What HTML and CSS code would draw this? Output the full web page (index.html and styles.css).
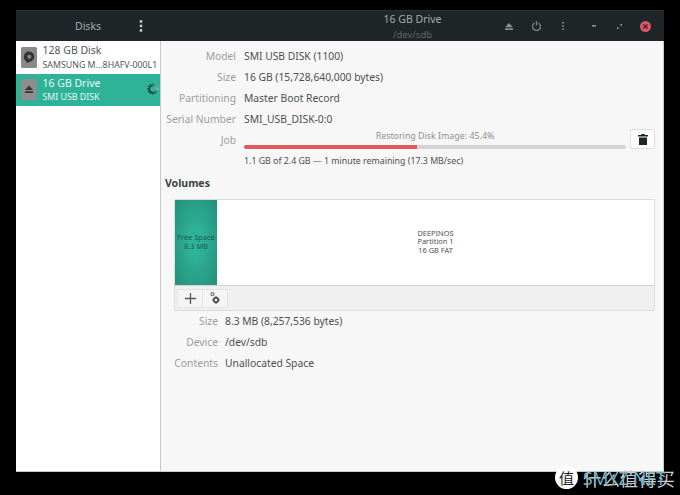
FILE: index.html
```html
<!DOCTYPE html>
<html lang="en">
<head>
<meta charset="utf-8">
<title>Disks</title>
<link rel="stylesheet" href="styles.css">
</head>
<body>
<div class="window">
  <header class="titlebar">
    <div class="title-left">
      <span class="app-title">Disks</span>
      <svg class="menu-dots" width="4" height="12" viewBox="0 0 4 12"><circle cx="2" cy="1.500" r="1.400"/><circle cx="2" cy="6" r="1.400"/><circle cx="2" cy="10.500" r="1.400"/></svg>
    </div>
    <div class="title-main">
      <div class="title-center">
        <div class="drive-title">16 GB Drive</div>
        <div class="drive-sub">/dev/sdb</div>
      </div>
      <div class="title-actions">
        <svg class="t-eject" width="8" height="7" viewBox="0 0 8 7"><path d="M4 0 8 4.200H0Z"/><rect x="0" y="5.300" width="8" height="1.700"/></svg>
        <svg class="t-power" width="9" height="10" viewBox="0 0 9 10"><path d="M2.500 2a4 4 0 1 0 4 0" fill="none" stroke-width="1.300"/><path d="M4.500 0v4.500" fill="none" stroke-width="1.300"/></svg>
        <svg class="t-more" width="2" height="8" viewBox="0 0 2 8"><rect width="2" height="1.800"/><rect y="3.100" width="2" height="1.800"/><rect y="6.200" width="2" height="1.800"/></svg>
        <svg class="t-min" width="4" height="2" viewBox="0 0 4 2"><rect width="4" height="1.600"/></svg>
        <svg class="t-max" width="5" height="5" viewBox="0 0 5 5"><path d="M2.600 0H5v2.400ZM0 2.600V5h2.400Z"/></svg>
        <span class="t-close"><svg width="5" height="5" viewBox="0 0 5 5"><path d="M.5.500l4 4M4.500.500l-4 4" stroke="#4a2028" stroke-width="1.400"/></svg></span>
      </div>
    </div>
  </header>
  <div class="content">
    <aside class="sidebar">
      <div class="disk-row">
        <svg class="disk-icon" width="16" height="21" viewBox="0 0 16 21"><rect width="16" height="21" rx="1.500" fill="#8a8a8a"/><path d="M8 4.500a5.300 5.300 0 0 1 5.300 5.300c0 2.600-1.700 4-3.700 4.800l-3.900 1.400-.6-1.900A5.300 5.300 0 0 1 8 4.500Z" fill="#333"/><circle cx="8.300" cy="9.800" r="2" fill="#8a8a8a"/></svg>
        <div class="disk-text">
          <div class="disk-name">128 GB Disk</div>
          <div class="disk-model">SAMSUNG M...8HAFV-000L1</div>
        </div>
      </div>
      <div class="disk-row selected">
        <svg class="disk-icon" width="16" height="21" viewBox="0 0 16 21"><rect width="16" height="21" rx="1.500" fill="#8d8d8d"/><path d="M8 6.500 12 11H4Z" fill="#333"/><rect x="4" y="12.300" width="8" height="1.700" fill="#333"/></svg>
        <div class="disk-text">
          <div class="disk-name">16 GB Drive</div>
          <div class="disk-model">SMI USB DISK</div>
        </div>
        <svg class="spinner" width="12" height="12" viewBox="0 0 12 12"><g stroke-width="1.700"><path d="M6 .500v2.700" stroke="#2f6a5a"/><path d="M8.800 1.200 7.400 3.600" stroke="#4a9a84"/><path d="M10.800 3.200 8.400 4.600" stroke="#5fb09a"/><path d="M11.500 6H8.800" stroke="#6cc0a8"/><path d="M10.800 8.800 8.400 7.400" stroke="#4a8a78"/><path d="M8.800 10.800 7.400 8.400" stroke="#2f6a5a"/><path d="M6 11.500V8.800" stroke="#1f4a3f"/><path d="M3.200 10.800l1.400-2.400" stroke="#1a3a32"/><path d="M1.200 8.800l2.400-1.400" stroke="#1a3a32"/><path d="M.500 6h2.700" stroke="#1a3a32"/><path d="M1.200 3.200l2.400 1.400" stroke="#1f4a3f"/><path d="M3.200 1.200l1.400 2.400" stroke="#24493e"/></g></svg>
      </div>
    </aside>
    <main class="details">
      <dl class="props">
        <dt>Model</dt><dd>SMI USB DISK (1100)</dd>
        <dt>Size</dt><dd>16 GB (15,728,640,000 bytes)</dd>
        <dt>Partitioning</dt><dd>Master Boot Record</dd>
        <dt>Serial Number</dt><dd>SMI_USB_DISK-0:0</dd>
      </dl>
      <div class="job">
        <div class="job-label">Job</div>
        <div class="job-body">
          <div class="job-top">
            <div class="job-progress">
              <div class="job-caption">Restoring Disk Image: 45.4%</div>
              <div class="bar"><div class="bar-fill" style="width:45.4%"></div></div>
            </div>
            <button class="trash" type="button" aria-label="Cancel job">
              <svg width="10" height="11" viewBox="0 0 10 11"><path d="M3.500 0h3l.5 1h3v1.500H0V1h3ZM1 3.500h8V11H1Z" fill="#1f2627"/></svg>
            </button>
          </div>
          <div class="job-detail">1.1 GB of 2.4 GB — 1 minute remaining (17.3 MB/sec)</div>
        </div>
      </div>
      <h2 class="volumes-title">Volumes</h2>
      <section class="volumes">
        <div class="graph">
          <div class="part free">Free Space<br>8.3 MB</div>
          <div class="part fat">DEEPINOS<br>Partition 1<br>16 GB FAT</div>
        </div>
        <div class="vol-toolbar">
          <button class="tool" type="button" aria-label="Create partition">
            <svg width="11" height="11" viewBox="0 0 11 11"><path d="M5.500 0v11M0 5.500h11" stroke="#555b5c" stroke-width="1.300"/></svg>
          </button>
          <button class="tool" type="button" aria-label="Additional options">
            <svg width="10" height="12" viewBox="0 0 10 12"><circle cx="2.500" cy="2.200" r="1.500" fill="none" stroke="#777" stroke-width="1.200"/><circle cx="6" cy="8" r="2.200" fill="none" stroke="#555" stroke-width="1.900"/><path d="M6 4.300v1.200M6 10.500v1.200M2.300 8h1.200M8.500 8h1.200" stroke="#555" stroke-width="1.300"/></svg>
          </button>
        </div>
      </section>
      <dl class="props vol-props">
        <dt>Size</dt><dd>8.3 MB (8,257,536 bytes)</dd>
        <dt>Device</dt><dd>/dev/sdb</dd>
        <dt>Contents</dt><dd>Unallocated Space</dd>
      </dl>
    </main>
  </div>
</div>
<div class="watermark">
  <span class="wm-badge">值</span>
  <span class="wm-text"><span class="wm-cn">什么值得买</span><span class="wm-en">SMYZ.NET</span></span>
</div>
</body>
</html>
```

FILE: styles.css
```css
* { box-sizing: border-box; }
html, body { margin: 0; height: 100%; }
body {
  width: 680px;
  height: 495px;
  overflow: hidden;
  background: #000;
  padding: 10px 16px 23px;
  font-family: "Noto Sans", sans-serif;
  font-size: 10.300px;
  color: #4a5152;
  position: relative;
}
.window {
  width: 648px;
  height: 462px;
  display: flex;
  flex-direction: column;
  background: #f7f7f7;
}
.titlebar {
  height: 31px;
  flex: none;
  display: flex;
  background: #1f2627;
  border-top: 1px solid #2c3334;
}
.title-left {
  width: 145px;
  flex: none;
  display: flex;
  align-items: center;
  padding-left: 59px;
  gap: 38px;
}
.app-title { color: #a7abab; font-size: 10.500px; }
.menu-dots { fill: #c5c8c8; }
.title-main { flex: 1; position: relative; display: flex; justify-content: flex-end; }
.title-center {
  position: absolute;
  left: 0;
  right: 0;
  top: 1px;
  text-align: center;
  line-height: 14px;
}
.drive-title { color: #a7abab; font-size: 10.500px; }
.drive-sub { color: #5f6667; font-size: 9.500px; margin-top: 2px; }
.title-actions {
  position: relative;
  display: flex;
  align-items: center;
  padding-right: 13px;
}
.t-eject { fill: #8b9090; margin-right: 19px; }
.t-power { stroke: #7d8282; margin-right: 21px; }
.t-more { fill: #6f7474; margin-right: 28px; }
.t-min { fill: #8b9090; margin-right: 21px; }
.t-max { fill: #8b9090; margin-right: 18px; }
.t-close {
  width: 11px;
  height: 11px;
  border-radius: 50%;
  background: #d9566b;
  display: flex;
  align-items: center;
  justify-content: center;
}
.content {
  flex: 1;
  display: flex;
  min-height: 0;
  border-right: 1px solid #c8c8c8;
  border-bottom: 1px solid #c8c8c8;
}
.sidebar {
  width: 145px;
  flex: none;
  background: #fff;
  border-right: 1px solid #c8c8c8;
}
.disk-row {
  height: 32.500px;
  display: flex;
  align-items: center;
  padding-left: 5px;
  gap: 5.500px;
  position: relative;
}
.disk-icon { flex: none; }
.disk-text { line-height: 14.500px; white-space: nowrap; padding-top: 1.400px; }
.disk-name { font-size: 10.500px; color: #52595a; }
.disk-model { font-size: 8.800px; color: #52595a; }
.selected { background: #2eb398; }
.selected .disk-name, .selected .disk-model { color: #eaf7f4; }
.spinner { position: absolute; right: 1px; top: 9.500px; }
.details { flex: 1; min-width: 0; padding: 5px 8px 0 4px; }
.props {
  margin: 0;
  display: grid;
  grid-template-columns: 71px 1fr;
  column-gap: 8px;
  row-gap: 0;
  line-height: 21px;
}
.props dt { text-align: right; color: #9a9e9e; white-space: nowrap; }
.props dd { margin: 0; color: #4a5152; white-space: nowrap; }
.job { display: grid; grid-template-columns: 71px 1fr; column-gap: 8px; }
.job-label { text-align: right; color: #9a9e9e; line-height: 21px; }
.job-top { display: flex; align-items: flex-start; gap: 4px; }
.job-progress { flex: 1; }
.job-caption {
  text-align: center;
  font-size: 8.850px;
  color: #8b9090;
  line-height: 12px;
}
.bar { height: 4px; margin-top: 3px; background: #d4d4d4; border-radius: 2px; overflow: hidden; }
.bar-fill { height: 100%; background: #e05a5a; }
.trash {
  width: 25px;
  height: 20px;
  margin-top: -1px;
  padding: 0;
  border: 1px solid #dedede;
  border-radius: 2px;
  background: #fff;
  display: flex;
  align-items: center;
  justify-content: center;
}
.job-detail { font-size: 8.800px; color: #4a5152; line-height: 14px; margin-top: 5px; }
.volumes-title {
  margin: 8px 0 0;
  font-size: 10.500px;
  font-weight: 700;
  color: #3a4142;
  line-height: 15px;
}
.volumes {
  margin: 8px 0 0 9px;
  border: 1px solid #dcdcdc;
  border-radius: 2px;
  height: 112px;
  background: #efefef;
  display: flex;
  flex-direction: column;
}
.graph { height: 86px; display: flex; border-bottom: 1px solid #d2d2d2; background: #fff; }
.part {
  display: flex;
  align-items: center;
  justify-content: center;
  text-align: center;
  font-size: 7.400px;
  line-height: 8.500px;
  padding-bottom: 2px;
}
.free {
  width: 42px;
  flex: none;
  color: #1d5a4c;
  background: radial-gradient(ellipse at center, #2eb398 20%, #258f7a 100%);
}
.fat { flex: 1; color: #4a5152; background: #fff; }
.vol-toolbar { flex: 1; display: flex; align-items: center; padding-left: 2px; }
.tool {
  width: 26px;
  height: 19px;
  padding: 0;
  background: #f5f5f5;
  border: 1px solid #e4e4e4;
  display: flex;
  align-items: center;
  justify-content: center;
}
.tool + .tool { border-left: 0; width: 25px; }
.vol-props { margin-top: 0; grid-template-columns: 53px 1fr; column-gap: 7px; }
.watermark {
  position: absolute;
  left: 555px;
  top: 466px;
  display: flex;
  align-items: center;
  gap: 5px;
  font-family: "Noto Sans CJK SC", "Noto Sans", sans-serif;
}
.wm-badge {
  width: 23px;
  height: 23px;
  border-radius: 50%;
  background: #fff;
  color: #222;
  font-size: 15px;
  line-height: 23px;
  text-align: center;
}
.wm-text { position: relative; display: block; width: 92px; height: 20px; white-space: nowrap; }
.wm-cn { position: absolute; left: 0; top: 0; color: #cfcfcf; font-size: 18.400px; line-height: 20px; }
.wm-en { position: absolute; left: 0; top: 0; color: #6fb3c6; font-size: 17.500px; line-height: 20px; font-family: "Noto Sans", sans-serif; }
```
